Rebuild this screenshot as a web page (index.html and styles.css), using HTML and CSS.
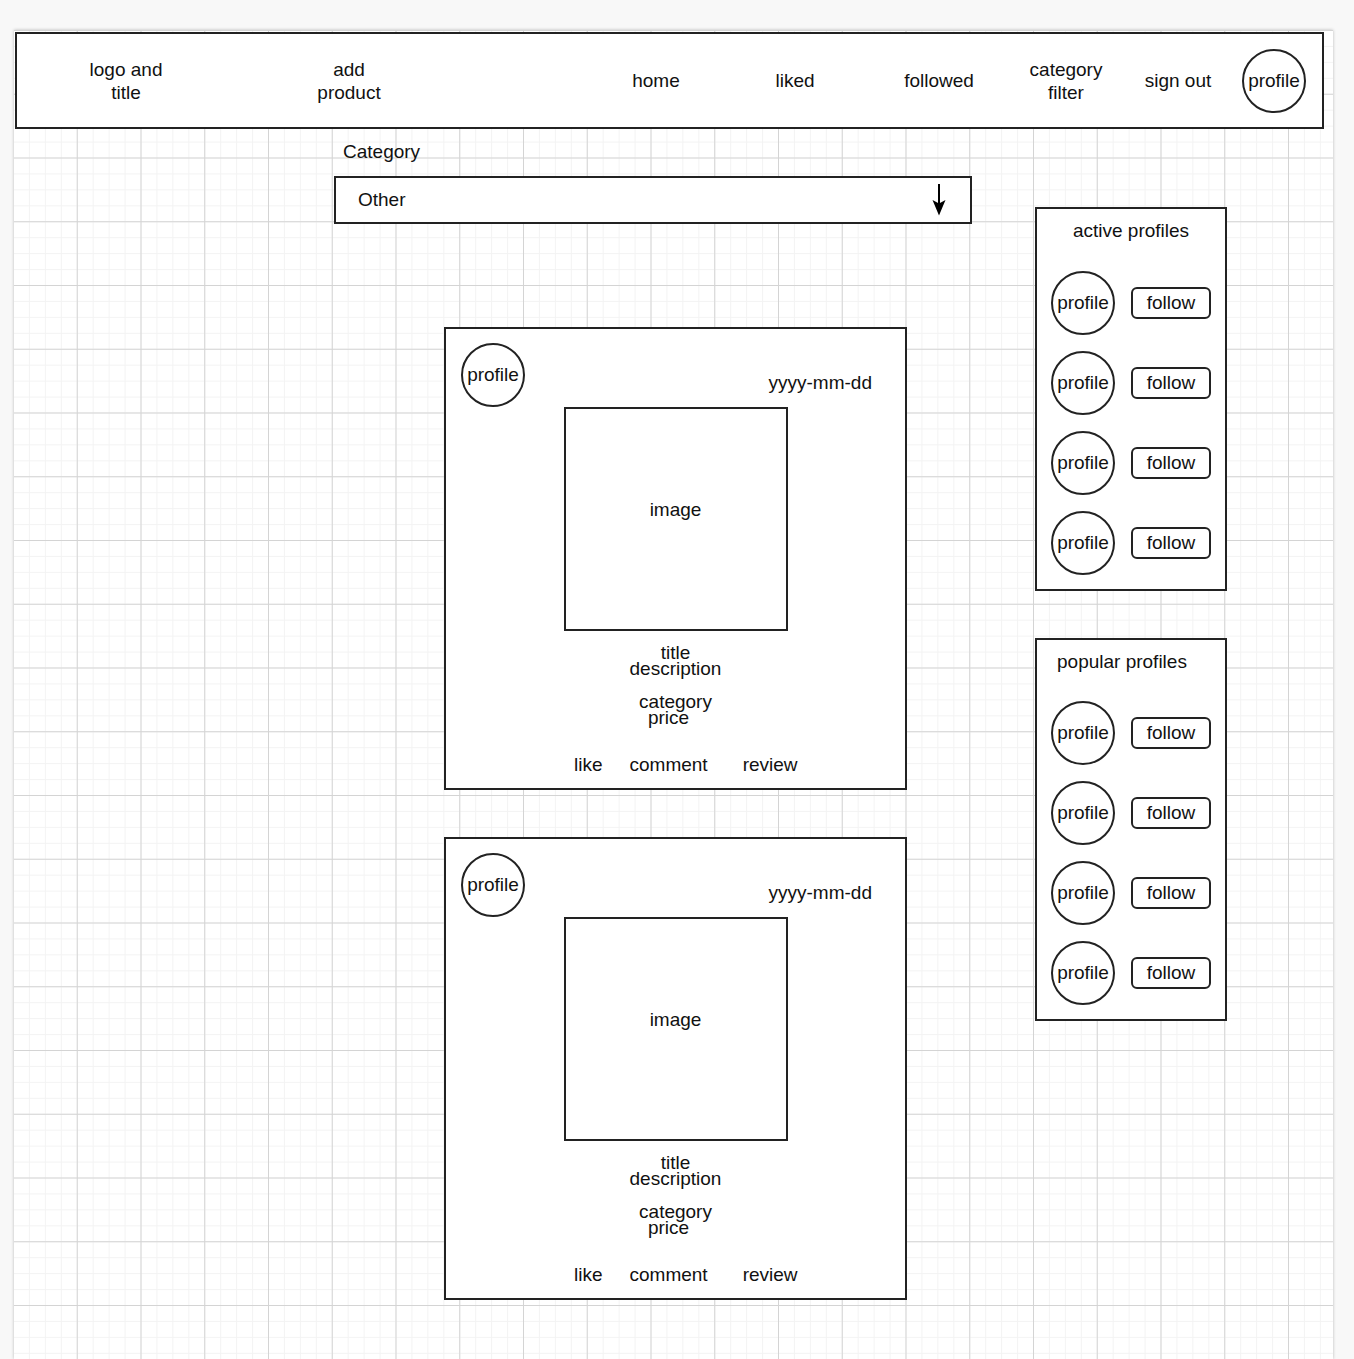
FILE: index.html
```html
<!DOCTYPE html>
<html lang="en">
<head>
<meta charset="utf-8">
<title>Wireframe</title>
<link rel="stylesheet" href="styles.css">
</head>
<body>
<div class="page">
  <header class="topbar">
    <div class="nav-item">logo and<br>title</div>
    <div class="nav-item">add<br>product</div>
    <div class="nav-spacer"></div>
    <div class="nav-item">home</div>
    <div class="nav-item">liked</div>
    <div class="nav-item">followed</div>
    <div class="nav-item">category<br>filter</div>
    <div class="nav-item">sign out</div>
    <div class="nav-item"><div class="avatar">profile</div></div>
  </header>

  <main class="content">
    <section class="feed">
      <div class="field-label">Category</div>
      <div class="select">
        <span class="select-value">Other</span>
        <svg class="select-arrow" width="14" height="32" viewBox="0 0 14 32">
          <line x1="7" y1="0" x2="7" y2="22" stroke="#000" stroke-width="2"/>
          <path d="M0.5 16 L7 31.5 L13.5 16 L7 19.5 Z" fill="#000"/>
        </svg>
      </div>

      <article class="card">
        <div class="card-head">
          <div class="avatar">profile</div>
          <div class="date">yyyy-mm-dd</div>
        </div>
        <div class="image">image</div>
        <div class="meta">
          <div>title</div>
          <div>description</div>
          <div class="meta-gap">category</div>
          <div class="price">price</div>
        </div>
        <div class="actions">
          <span>like</span>
          <span class="act-comment">comment</span>
          <span class="act-review">review</span>
        </div>
      </article>

      <article class="card">
        <div class="card-head">
          <div class="avatar">profile</div>
          <div class="date">yyyy-mm-dd</div>
        </div>
        <div class="image">image</div>
        <div class="meta">
          <div>title</div>
          <div>description</div>
          <div class="meta-gap">category</div>
          <div class="price">price</div>
        </div>
        <div class="actions">
          <span>like</span>
          <span class="act-comment">comment</span>
          <span class="act-review">review</span>
        </div>
      </article>
    </section>

    <aside class="sidebar">
      <div class="panel">
        <div class="panel-title">active profiles</div>
        <div class="profile-list">
          <div class="profile-row"><div class="avatar">profile</div><div class="follow">follow</div></div>
          <div class="profile-row"><div class="avatar">profile</div><div class="follow">follow</div></div>
          <div class="profile-row"><div class="avatar">profile</div><div class="follow">follow</div></div>
          <div class="profile-row"><div class="avatar">profile</div><div class="follow">follow</div></div>
        </div>
      </div>

      <div class="panel panel-popular">
        <div class="panel-title panel-title-left">popular profiles</div>
        <div class="profile-list">
          <div class="profile-row"><div class="avatar">profile</div><div class="follow">follow</div></div>
          <div class="profile-row"><div class="avatar">profile</div><div class="follow">follow</div></div>
          <div class="profile-row"><div class="avatar">profile</div><div class="follow">follow</div></div>
          <div class="profile-row"><div class="avatar">profile</div><div class="follow">follow</div></div>
        </div>
      </div>
    </aside>
  </main>
</div>
</body>
</html>
```

FILE: styles.css
```css
html, body {
  margin: 0;
  padding: 0;
  overflow: hidden;
  background: #f8f8f8;
}

body {
  font-family: "Liberation Sans", Arial, sans-serif;
  font-size: 19px;
  color: #111;
}

.page {
  box-sizing: border-box;
  margin: 30px 0 0 14px;
  width: 1319px;
  height: 1329px;
  padding-top: 2px;
  background-color: #fff;
  background-image:
    linear-gradient(to right, #d4d4d4 1px, transparent 1px),
    linear-gradient(to bottom, #d4d4d4 1px, transparent 1px),
    linear-gradient(to right, #f3f3f3 1px, transparent 1px),
    linear-gradient(to bottom, #f3f3f3 1px, transparent 1px);
  background-size:
    63.75px 63.75px,
    63.75px 63.75px,
    15.9375px 15.9375px,
    15.9375px 15.9375px;
  background-position: -1px 0, -1px 0, -1px 0, -1px 0;
  box-shadow: 0 0 3px rgba(0, 0, 0, 0.25);
}

/* Header */
.topbar {
  box-sizing: border-box;
  margin-left: 1px;
  width: 1309px;
  height: 97px;
  border: 2px solid #222;
  background: #fff;
  display: grid;
  grid-template-columns: 218px 228px 1fr 140px 138px 150px 104px 120px 72px;
  padding-right: 12px;
  align-items: center;
}

.nav-item {
  display: flex;
  justify-content: center;
  text-align: center;
  line-height: 23px;
}

/* Shared avatar circle */
.avatar {
  box-sizing: border-box;
  width: 64px;
  height: 64px;
  flex: none;
  border: 2px solid #222;
  border-radius: 50%;
  background: #fff;
  display: flex;
  align-items: center;
  justify-content: center;
  line-height: 22px;
}

/* Content */
.content {
  display: flex;
  align-items: flex-start;
}

.feed {
  margin-left: 320px;
  width: 638px;
  padding-top: 12px;
}

.field-label {
  padding-left: 9px;
  line-height: 22px;
}

.select {
  box-sizing: border-box;
  margin-top: 13px;
  height: 48px;
  border: 2px solid #222;
  background: #fff;
  display: flex;
  align-items: center;
  justify-content: space-between;
  padding: 0 24px 0 22px;
}

.select-arrow {
  display: block;
}

/* Cards */
.card {
  box-sizing: border-box;
  margin-left: 110px;
  margin-top: 103px;
  width: 463px;
  height: 463px;
  border: 2px solid #222;
  background: #fff;
  display: flex;
  flex-direction: column;
}

.card + .card {
  margin-top: 47px;
}

.card-head {
  display: flex;
  justify-content: space-between;
  align-items: flex-start;
  padding: 14px 33px 0 15px;
}

.date {
  margin-top: 29px;
  line-height: 22px;
}

.image {
  box-sizing: border-box;
  align-self: center;
  width: 224px;
  height: 224px;
  border: 2px solid #222;
  display: flex;
  align-items: center;
  justify-content: center;
  padding-bottom: 18px;
}

.meta {
  margin-top: 14px;
  text-align: center;
  line-height: 16px;
}

.meta-gap {
  margin-top: 17px;
}

.price {
  padding-right: 14px;
}

.actions {
  display: flex;
  margin-top: 28px;
  padding-left: 128px;
  line-height: 22px;
}

.act-comment {
  margin-left: 27px;
}

.act-review {
  margin-left: 35px;
}

/* Sidebar */
.sidebar {
  margin-left: 63px;
  margin-top: 78px;
  width: 192px;
}

.panel {
  box-sizing: border-box;
  border: 2px solid #222;
  background: #fff;
  padding: 11px 0 14px 0;
}

.panel-popular {
  margin-top: 47px;
}

.panel-title {
  line-height: 22px;
  text-align: center;
}

.panel-title-left {
  text-align: left;
  padding-left: 20px;
}

.profile-list {
  margin-top: 29px;
  padding-left: 14px;
  display: flex;
  flex-direction: column;
  gap: 16px;
}

.panel-popular .profile-list {
  margin-top: 28px;
}

.profile-row {
  display: flex;
  align-items: center;
  gap: 16px;
}

.follow {
  box-sizing: border-box;
  width: 80px;
  height: 32px;
  border: 2px solid #222;
  border-radius: 6px;
  display: flex;
  align-items: center;
  justify-content: center;
  line-height: 22px;
}
```
